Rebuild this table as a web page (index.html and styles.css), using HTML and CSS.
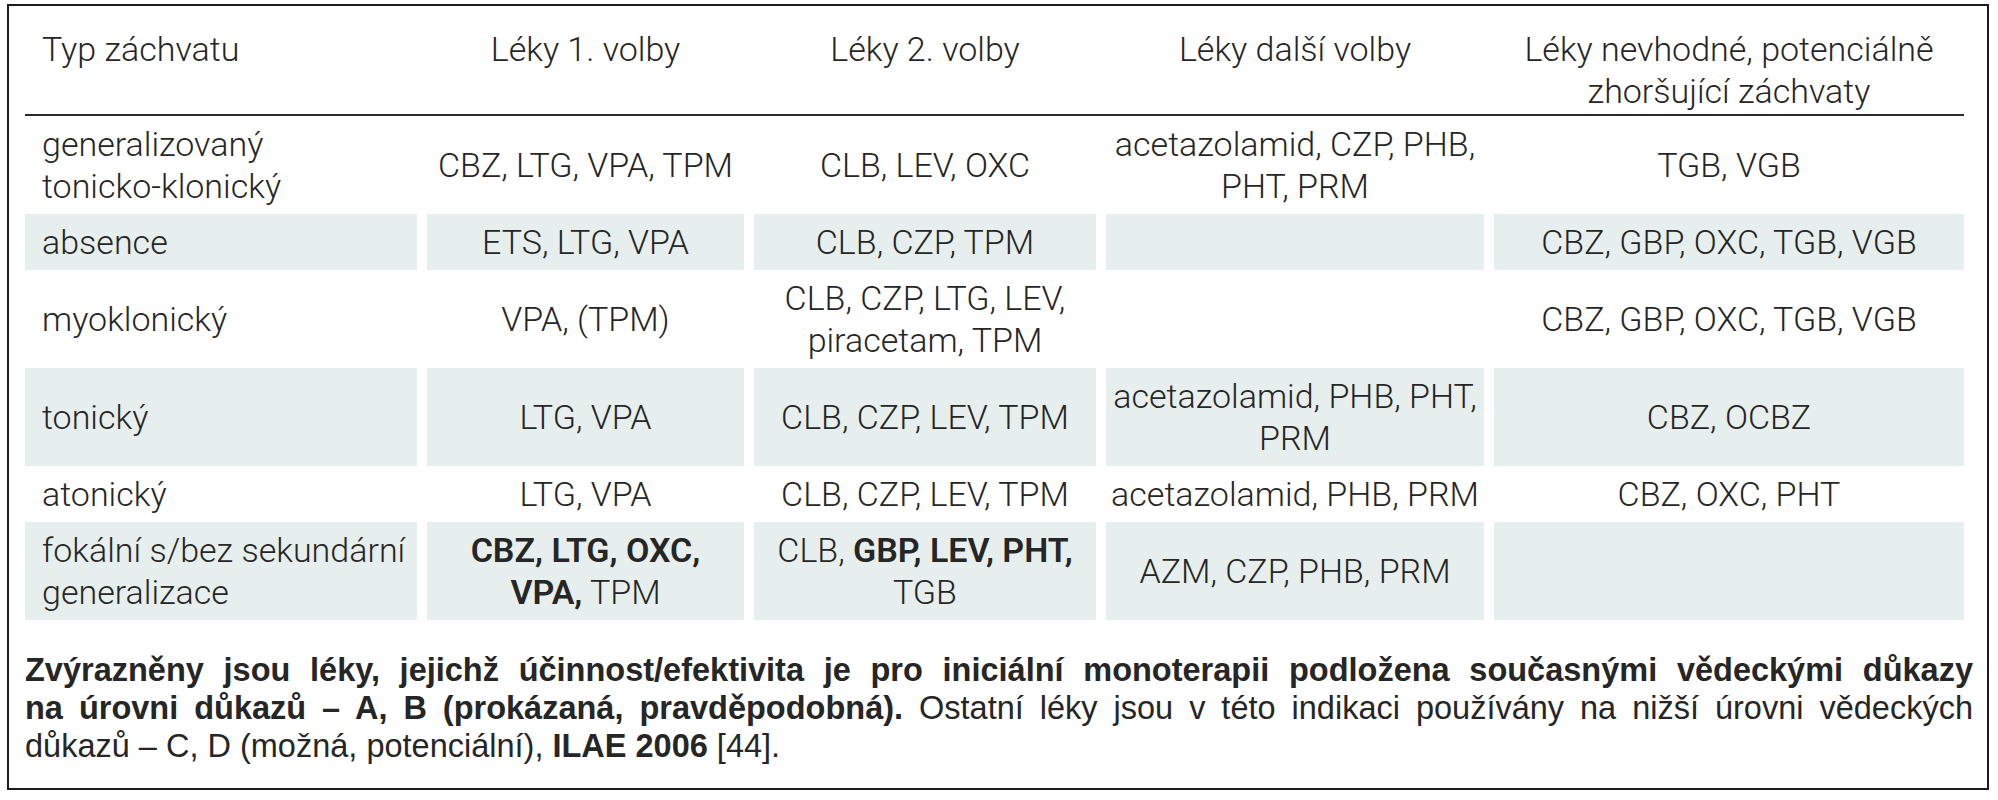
FILE: index.html
```html
<!DOCTYPE html>
<html lang="cs">
<head>
<meta charset="utf-8">
<title>Léčba záchvatů</title>
<link rel="stylesheet" href="styles.css">
</head>
<body>
<div class="box">
  <div class="grid">
    <div class="th first">Typ záchvatu</div>
    <div class="th">Léky 1. volby</div>
    <div class="th">Léky 2. volby</div>
    <div class="th">Léky další volby</div>
    <div class="th"><div class="ln">Léky nevhodné, potenciálně</div><div class="ln">zhoršující záchvaty</div></div>
    <div class="rule"></div>

    <div class="row">
      <div class="td first"><div class="ln">generalizovaný</div><div class="ln">tonicko-klonický</div></div>
      <div class="td">CBZ, LTG, VPA, TPM</div>
      <div class="td">CLB, LEV, OXC</div>
      <div class="td"><div class="ln">acetazolamid, CZP, PHB,</div><div class="ln">PHT, PRM</div></div>
      <div class="td">TGB, VGB</div>
    </div>
    <div class="row alt">
      <div class="td first">absence</div>
      <div class="td">ETS, LTG, VPA</div>
      <div class="td">CLB, CZP, TPM</div>
      <div class="td"></div>
      <div class="td">CBZ, GBP, OXC, TGB, VGB</div>
    </div>
    <div class="row">
      <div class="td first">myoklonický</div>
      <div class="td">VPA, (TPM)</div>
      <div class="td"><div class="ln">CLB, CZP, LTG, LEV,</div><div class="ln">piracetam, TPM</div></div>
      <div class="td"></div>
      <div class="td">CBZ, GBP, OXC, TGB, VGB</div>
    </div>
    <div class="row alt">
      <div class="td first">tonický</div>
      <div class="td">LTG, VPA</div>
      <div class="td">CLB, CZP, LEV, TPM</div>
      <div class="td"><div class="ln">acetazolamid, PHB, PHT,</div><div class="ln">PRM</div></div>
      <div class="td">CBZ, OCBZ</div>
    </div>
    <div class="row">
      <div class="td first">atonický</div>
      <div class="td">LTG, VPA</div>
      <div class="td">CLB, CZP, LEV, TPM</div>
      <div class="td">acetazolamid, PHB, PRM</div>
      <div class="td">CBZ, OXC, PHT</div>
    </div>
    <div class="row alt">
      <div class="td first"><div class="ln">fokální s/bez sekundární</div><div class="ln">generalizace</div></div>
      <div class="td"><div class="ln"><b>CBZ, LTG, OXC,</b></div><div class="ln"><b>VPA,</b> TPM</div></div>
      <div class="td"><div class="ln">CLB, <b>GBP, LEV, PHT,</b></div><div class="ln">TGB</div></div>
      <div class="td">AZM, CZP, PHB, PRM</div>
      <div class="td"></div>
    </div>
  </div>

  <div class="note">
    <div class="line just"><span class="sb">Zvýrazněny jsou léky, jejichž účinnost/efektivita je pro iniciální monoterapii podložena současnými vědeckými důkazy</span></div>
    <div class="line just"><span class="sb">na úrovni důkazů – A, B (prokázaná, pravděpodobná).</span> Ostatní léky jsou v této indikaci používány na nižší úrovni vědeckých</div>
    <div class="line">důkazů – C, D (možná, potenciální), <span class="sb">ILAE 2006</span> [44].</div>
  </div>
</div>
</body>
</html>
```

FILE: styles.css
```css
html, body {
  margin: 0;
  padding: 0;
  background: #ffffff;
}

body {
  width: 1998px;
  height: 800px;
  overflow: hidden;
  color: #2b2b2b;
}

.box {
  box-sizing: border-box;
  margin: 4px 0 0 7px;
  width: 1982px;
  height: 786px;
  border: 2px solid #1c1c1c;
  padding: 0 14px 0 16px;
}

.grid {
  display: grid;
  grid-template-columns: 392px 317px 342px 378px 470px;
  column-gap: 10px;
  font-family: Roboto, "Liberation Sans", sans-serif;
  font-weight: 300;
  font-size: 34px;
  line-height: 42px;
  color: #262626;
}

.th,
.td {
  display: flex;
  flex-direction: column;
  align-items: center;
  text-align: center;
  white-space: nowrap;
}

.th {
  justify-content: flex-start;
  padding: 22px 0 2px;
}

.td {
  justify-content: center;
  padding: 7px 0;
}

.th.first,
.td.first {
  align-items: flex-start;
  text-align: left;
  padding-left: 17px;
}

.ln {
  display: block;
}

.rule {
  grid-column: 1 / -1;
  height: 2px;
  background: #2a2a2a;
}

.row {
  display: contents;
}

.row.alt .td {
  background: #e6efed;
}

.td b {
  font-weight: 600;
}

.note {
  margin-top: 31px;
  font-family: "Liberation Sans", Arial, sans-serif;
  font-size: 32.5px;
  line-height: 38px;
  color: #262626;
}

.line {
  text-align: left;
}

.line.just {
  text-align: justify;
  text-align-last: justify;
}

.sb {
  font-weight: 700;
}
```
